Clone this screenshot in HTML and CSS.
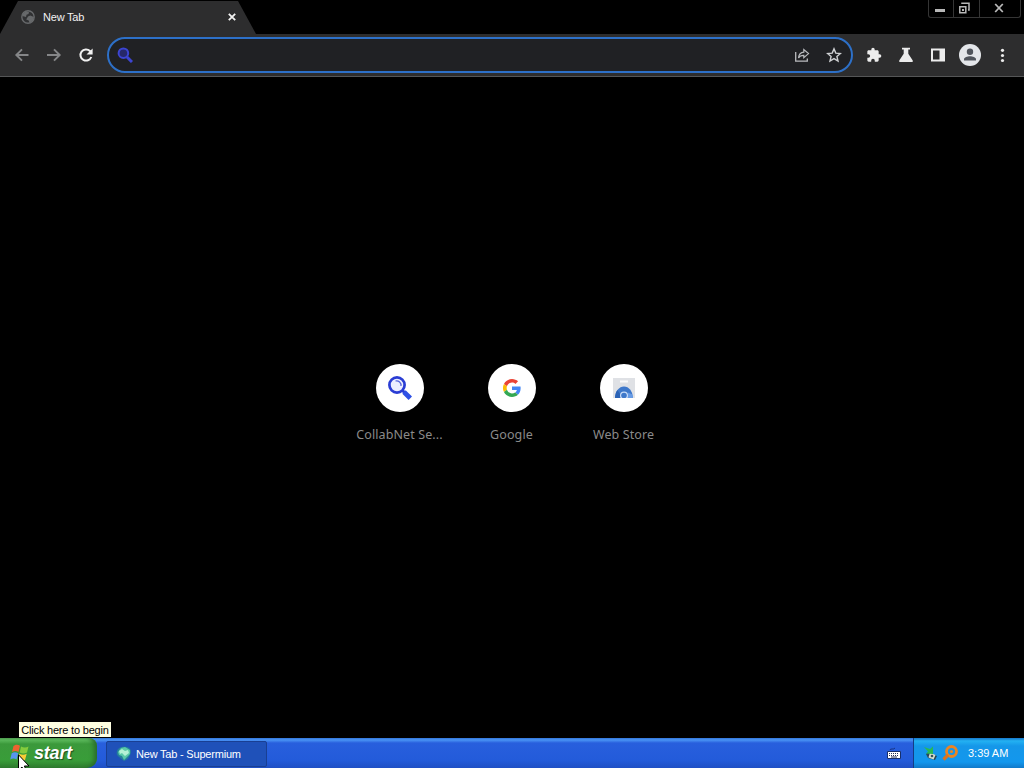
FILE: index.html
```html
<!DOCTYPE html>
<html lang="en">
<head>
	<meta charset="UTF-8">
	<title>New Tab</title>
	<link rel="stylesheet" href="styles.css">
</head>
<body>
	<div class="tabstrip">
		<div class="tab">
			<svg class="globe" width="14" height="14" viewBox="0 0 14 14">
				<circle cx="7" cy="7" r="6.2" fill="#303133" stroke="#67696b" stroke-width="1.4"/>
				<path d="M2 3.5L5 1.3l3 .7-.5 2-2 .8L5 7 1.2 6zM7 6.5l2.2-1L13 7l-1 3.5-3.3 2.7-1-2.8-2.5-.8z" fill="#67696b"/>
			</svg>
			<span class="tab-title">New Tab</span>
			<svg class="tab-close" width="8" height="8" viewBox="0 0 8 8"><path d="M.8.8l6.4 6.4M7.2.8L.8 7.2" stroke="#f2f2f2" stroke-width="1.8"/></svg>
		</div>
		<div class="window-buttons">
			<div class="wb min"><svg width="12" height="12" viewBox="0 0 12 12"><path d="M1 8.5h10" stroke="#b8b8b8" stroke-width="3"/></svg></div>
			<div class="wb max"><svg width="12" height="12" viewBox="0 0 12 12"><path d="M1.8 4.8h6v6h-6zM4 2V1.2h7V8h-1" fill="none" stroke="#b8b8b8" stroke-width="1.5"/><path d="M4 7h2v2H4z" fill="#b8b8b8"/></svg></div>
			<div class="wb close"><svg width="12" height="12" viewBox="0 0 12 12"><path d="M2.2 2l7.6 8M9.8 2L2.2 10" stroke="#b8b8b8" stroke-width="1.8"/></svg></div>
		</div>
	</div>

	<div class="toolbar">
		<svg class="tool" width="16" height="16" viewBox="0 0 16 16"><path d="M14.500 8H2.500M8 2.300L2.300 8 8 13.700" fill="none" stroke="#858688" stroke-width="1.900"/></svg>
		<svg class="tool" width="16" height="16" viewBox="0 0 16 16"><path d="M1 8h12.500M8 2.300L13.700 8 8 13.700" fill="none" stroke="#858688" stroke-width="1.900"/></svg>
		<svg class="tool" width="16" height="16" viewBox="0 0 16 16"><path d="M13.300 10A5.600 5.600 0 1 1 12 4L13 5" fill="none" stroke="#f1f1f1" stroke-width="2"/><path d="M14.600 1.400v6.100H8.500z" fill="#f1f1f1"/></svg>
		<div class="omnibox">
			<svg width="16" height="16" viewBox="0 0 16 16"><circle cx="6.400" cy="6.200" r="4.800" fill="#26286a" stroke="#3c45d2" stroke-width="2"/><path d="M10 10l5 5" stroke="#3c45d2" stroke-width="3"/></svg>
			<span class="grow"></span>
			<svg width="16" height="16" viewBox="0 0 16 16"><path d="M1.700 5v9.200h11.600V11.500" fill="none" stroke="#b9bbbe" stroke-width="1.300"/><path d="M4.500 11c.4-4.200 2.200-5.700 5.300-5.900V2.600l4.700 4-4.700 4V8.300C7 8.300 5.500 9 4.500 11z" fill="none" stroke="#b9bbbe" stroke-width="1.200"/></svg>
			<svg width="16" height="16" viewBox="0 0 16 16"><path d="M8 1.900l1.800 4.200 4.600.4-3.500 3 1.100 4.500L8 11.600 4 14l1.100-4.500-3.500-3 4.600-.4z" fill="none" stroke="#cfd1d3" stroke-width="1.400"/></svg>
		</div>
		<svg class="tool" width="16" height="16" viewBox="0 0 24 24"><path fill="#ececec" d="M20.500 11H19V7c0-1.100-.9-2-2-2h-4V3.500a2.500 2.500 0 0 0-5 0V5H4c-1.100 0-2 .9-2 2v3.800h1.500a2.700 2.700 0 0 1 0 5.400H2V20c0 1.100.9 2 2 2h3.800v-1.500a2.700 2.700 0 0 1 5.400 0V22H17c1.100 0 2-.9 2-2v-4h1.500a2.500 2.500 0 0 0 0-5z"/></svg>
		<svg class="tool" width="16" height="16" viewBox="0 0 16 16"><path d="M4 .8h8v1.700h-1.700v4.300l4.300 6.400c.6.900.1 1.800-.8 1.800H2.200c-.9 0-1.400-.9-.8-1.800l4.300-6.400V2.500H4z" fill="#ececec"/></svg>
		<svg class="tool" width="16" height="16" viewBox="0 0 16 16"><path fill-rule="evenodd" d="M1 1.500h14v13H1zM3 3.500v9h6.500v-9z" fill="#ececec"/></svg>
		<svg class="avatar" width="22" height="22" viewBox="0 0 22 22"><circle cx="11" cy="11" r="11" fill="#e4e6ea"/><circle cx="11" cy="7.800" r="3.200" fill="#50545c"/><path d="M5 16.500v-1.200c0-2 3.500-3 6-3s6 1 6 3v1.200z" fill="#50545c"/></svg>
		<svg class="tool" width="16" height="16" viewBox="0 0 16 16"><g fill="#ececec"><circle cx="8.500" cy="3.300" r="1.600"/><circle cx="8.500" cy="8.500" r="1.600"/><circle cx="8.500" cy="13.500" r="1.600"/></g></svg>
	</div>

	<div class="page">
		<div class="tile">
			<div class="disc">
				<svg width="24" height="24" viewBox="0 0 24 24"><circle cx="9" cy="9" r="7.600" fill="#eceeff" stroke="#2a3dd4" stroke-width="2.700"/><path d="M7.500 5a4.500 4.500 0 0 1 5.500 5" fill="none" stroke="#5362dc" stroke-width="1.200"/><path d="M14 14l2.500 2.500" stroke="#2a3dd4" stroke-width="3"/><path d="M16 16l6.300 6.300" stroke="#2e50e6" stroke-width="4.800"/></svg>
			</div>
			<span class="label">CollabNet Se...</span>
		</div>
		<div class="tile">
			<div class="disc">
				<svg width="18" height="18" viewBox="0 0 48 48"><path fill="#EA4335" d="M24 9.500c3.540 0 6.710 1.220 9.210 3.600l6.850-6.850C35.900 2.380 30.470 0 24 0 14.620 0 6.510 5.380 2.560 13.220l7.980 6.190C12.430 13.720 17.740 9.500 24 9.500z"/><path fill="#4285F4" d="M46.980 24.550c0-1.570-.15-3.090-.38-4.550H24v9.020h12.940c-.58 2.960-2.260 5.480-4.780 7.180l7.730 6c4.510-4.180 7.090-10.360 7.090-17.650z"/><path fill="#FBBC05" d="M10.530 28.590a14.500 14.500 0 0 1 0-9.180l-7.980-6.190a24 24 0 0 0 0 21.560z"/><path fill="#34A853" d="M24 48c6.480 0 11.930-2.130 15.890-5.810l-7.730-6c-2.150 1.450-4.920 2.300-8.160 2.300-6.260 0-11.570-4.220-13.470-9.910l-7.980 6.190C6.510 42.620 14.620 48 24 48z"/></svg>
			</div>
			<span class="label">Google</span>
		</div>
		<div class="tile">
			<div class="disc">
				<svg width="22" height="20" viewBox="0 0 22 20"><path d="M0 0h22v20H0z" fill="#dfe1e5"/><path d="M7 2.500h8v2H7z" fill="#fafafa"/><path d="M2 20a9 11.500 0 0 1 18 0z" fill="#3e78ca"/><path d="M2 20c0-3 .8-6 2.300-8L8 17v3z" fill="#2b62b5"/><path d="M14 20l1-5.500 4.500 2 .5 3.500z" fill="#679be5"/><circle cx="11" cy="17.500" r="4" fill="#c9dcf7"/><circle cx="11" cy="17.500" r="2.800" fill="#3e78ca"/></svg>
			</div>
			<span class="label">Web Store</span>
		</div>
	</div>

	<div class="taskbar">
		<div class="start">
			<svg width="20" height="20" viewBox="0 0 20 20">
				<path d="M3.500 3C6 1 8 1.500 10 2.800L8.500 9C6.500 7.800 4.500 7.500 2 9z" fill="#ee6330"/>
				<path d="M11 3.500c2.500 1.400 5 1.500 7.500 0L17 9.500c-2.500 1.500-5 1.300-7.300 0z" fill="#84cb3d"/>
				<path d="M1.700 10.200c2.500-1.600 4.500-1.200 6.500 0l-1.600 6.300c-2-1.300-4-1.500-6.400 0z" fill="#5795ef"/>
				<path d="M9.300 10.800c2.500 1.300 5 1.300 7.400 0L15 17c-2.500 1.400-5 1.200-7.200-.2z" fill="#f8cc36"/>
			</svg>
			<span>start</span>
		</div>
		<div class="task">
			<svg width="16" height="16" viewBox="0 0 16 16"><path d="M1 5c1-4 6-5 10-4 4 1 5 5 3 8-1 3-3 5-6 6-2-1-3-3-5-4-2-2-3-3-2-6z" fill="#247f9b"/><path d="M2 6l3-4 4-1 5 3v4l-3 3-3 3-2-4-3-1z" fill="#59c9a8"/><path d="M3 5l3-2 3 2 3-1 1 3-4 3-3-3-2 1z" fill="#b4f2d6"/></svg>
			<span>New Tab - Supermium</span>
		</div>
		<span class="grow"></span>
		<svg class="keyboard" width="14" height="13" viewBox="0 0 14 13"><path d="M3 3c0-2 4 0 5-2" fill="none" stroke="#173383"/><path d="M.5 4.500h13v7H.5z" fill="#fff" stroke="#172f6b"/><path d="M2 6.500h10M2 8.500h10" stroke="#273257" stroke-dasharray="1 1"/><path d="M4 10h6" stroke="#273257"/></svg>
		<div class="tray">
			<svg width="16" height="16" viewBox="0 0 16 16"><path d="M3 9l3-2 8 4-2 4-7-2z" fill="#28485a"/><path d="M7 7.500l5.500 2.500-2 4.500-5-2z" fill="#d5dfcf"/><circle cx="9" cy="11" r="1.300" fill="#36535a"/><path d="M1 2l6 2 3-2.500L10 9l-7-.5 2-2z" fill="#27b957"/></svg>
			<svg width="17" height="16" viewBox="0 0 17 16"><circle cx="9.500" cy="6.500" r="5" fill="none" stroke="#e98523" stroke-width="2.800"/><circle cx="9.500" cy="6.500" r="1.600" fill="#e98523"/><path d="M6 10l-4.500 4.500" stroke="#d97420" stroke-width="3.200"/></svg>
			<span class="clock">3:39 AM</span>
		</div>
	</div>

	<div class="tooltip">Click here to begin</div>
	<svg class="cursor" width="12" height="20" viewBox="0 0 12 20"><path d="M.5.8v15.500L4 13l2.500 5.700 2.300-1L6.400 12H11z" fill="#fff" stroke="#000"/></svg>
</body>
</html>
```
FILE: styles.css
```css
* { box-sizing: border-box; }
body {
	margin: 0;
	width: 1024px;
	height: 768px;
	overflow: hidden;
	display: flex;
	flex-direction: column;
	background: #000;
	font: 11px Tahoma, "Liberation Sans", Arial, sans-serif;
	letter-spacing: -.2px;
	cursor: default;
}
svg { display: block; flex: none; }
.grow { flex: 1; }

/* tab strip */
.tabstrip {
	height: 34px;
	display: flex;
	justify-content: space-between;
	align-items: flex-start;
}
.tab {
	width: 256px;
	height: 33px;
	margin-top: 1px;
	padding: 0 20px 1px 21px;
	display: flex;
	align-items: center;
	background: #2d2d2e;
	color: #f2f2f2;
	clip-path: polygon(18px 0, 238px 0, 256px 100%, 0 100%);
}
.tab-title {
	flex: 1;
	margin-left: 8px;
}
.window-buttons {
	display: flex;
	width: 93px;
	height: 18px;
	margin-right: 3px;
	border: 1px solid #353535;
	border-top: 0;
	border-radius: 0 0 3px 3px;
}
.wb {
	display: flex;
	justify-content: center;
	padding: 2px 2px 0 0;
	width: 24px;
}
.wb + .wb { border-left: 1px solid #353535; }
.wb.max { width: 26px; padding-right: 5px; }
.wb.close { width: 41px; }

/* toolbar */
.toolbar {
	height: 43px;
	padding: 0 14px;
	display: flex;
	align-items: center;
	background: #2d2d2e;
	border-bottom: 1px solid #555657;
}
.tool { margin-right: 16px; }
.tool:last-child { margin-right: 0; }
.omnibox {
	width: 746px;
	height: 36px;
	margin: 0 13px 0 -3px;
	padding: 0 9px 0 8px;
	display: flex;
	align-items: center;
	gap: 16px;
	background: #202124;
	border: 2px solid #2d70c8;
	border-radius: 18px;
}
.avatar { margin: 0 13px 0 -3px; }

/* shortcuts */
.page {
	flex: 1;
	display: flex;
	justify-content: center;
	padding-top: 287px;
}
.tile {
	width: 112px;
	display: flex;
	flex-direction: column;
	align-items: center;
}
.disc {
	width: 48px;
	height: 48px;
	border-radius: 50%;
	background: #fff;
	display: flex;
	align-items: center;
	justify-content: center;
}
.label {
	margin-top: 13px;
	padding-right: 1px;
	font: 12.5px/20px "Noto Sans", sans-serif;
	letter-spacing: .1px;
	color: #8a8a8a;
	white-space: nowrap;
}

/* taskbar */
.taskbar {
	height: 30px;
	display: flex;
	align-items: center;
	background: linear-gradient(#3275d8 0, #4993f4 2px, #285fdd 5px, #235bda 22px, #1f4fc4);
	color: #fff;
}
.start {
	width: 97px;
	height: 30px;
	padding-left: 10px;
	display: flex;
	align-items: center;
	gap: 4px;
	border-radius: 0 8px 10px 0;
	background: linear-gradient(#59a558 0, #5cba5c 2px, #3b993b 6px, #399d39 22px, #2e7c2e);
	box-shadow: inset -5px 0 5px -2px #296b2b;
	font: italic bold 18px "Liberation Sans", Arial, sans-serif;
	text-shadow: 1px 1px 1px #1f4d20;
}
.start span { margin-top: 1px; letter-spacing: -.2px; }
.task {
	width: 161px;
	height: 26px;
	margin: 2px 0 0 9px;
	padding-left: 9px;
	display: flex;
	align-items: center;
	gap: 4px;
	background: #1f51b9;
	border: 1px solid #193f93;
	border-radius: 2px;
}
.keyboard { margin-right: 12px; }
.tray {
	width: 111px;
	height: 30px;
	padding-left: 9px;
	display: flex;
	align-items: center;
	gap: 3px;
	background: linear-gradient(#1777cb 0, #23b1f2 3px, #1597e9 8px, #1397ed 24px, #1179c9);
	border-left: 1px solid #143d84;
}
.clock { margin-left: 6px; letter-spacing: 0; }

/* hover hint and pointer, over the taskbar */
.tooltip {
	position: absolute;
	left: 18px;
	top: 721px;
	width: 94px;
	height: 17px;
	border: 1px solid #000;
	background: #ffffe1;
	color: #000;
	line-height: 16px;
	text-align: center;
	white-space: nowrap;
}
.cursor {
	position: absolute;
	left: 18px;
	top: 754px;
}
```
